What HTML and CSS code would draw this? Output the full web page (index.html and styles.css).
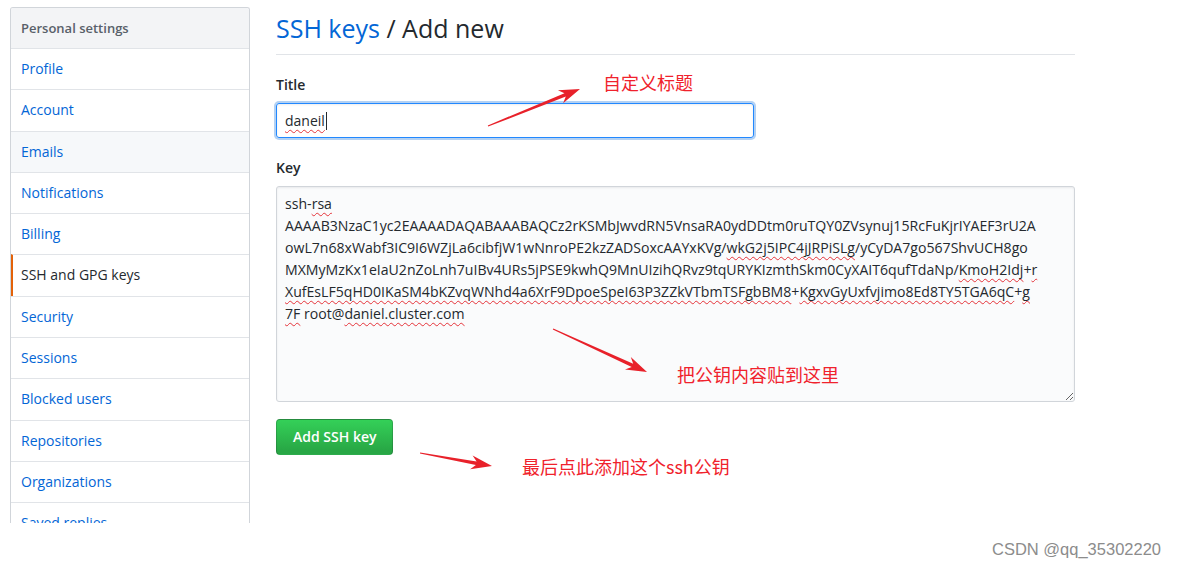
FILE: index.html
```html
<!DOCTYPE html>
<html lang="en">
<head>
<meta charset="utf-8">
<title>SSH keys / Add new</title>
<link rel="stylesheet" href="styles.css">
</head>
<body>
<div class="page">
  <nav class="menu">
    <div class="menu-heading">Personal settings</div>
    <a class="menu-item">Profile</a>
    <a class="menu-item">Account</a>
    <a class="menu-item hover">Emails</a>
    <a class="menu-item">Notifications</a>
    <a class="menu-item">Billing</a>
    <a class="menu-item selected">SSH and GPG keys</a>
    <a class="menu-item">Security</a>
    <a class="menu-item">Sessions</a>
    <a class="menu-item">Blocked users</a>
    <a class="menu-item">Repositories</a>
    <a class="menu-item">Organizations</a>
    <a class="menu-item">Saved replies</a>
  </nav>
  <main class="content">
    <h2 class="subhead"><a class="crumb">SSH keys</a> / Add new</h2>
    <div class="form-group">
      <label class="label">Title</label>
      <div class="input focused"><span class="sp">daneil</span><span class="caret"></span></div>
    </div>
    <div class="form-group">
      <label class="label">Key</label>
      <div class="textarea">
        <div class="line">ssh-<span class="sp">rsa</span></div>
        <div class="line">AAAAB3NzaC1yc2EAAAADAQABAAABAQCz2rKSMbJwvdRN5VnsaRA0ydDDtm0ruTQY0ZVsynuj15RcFuKjrIYAEF3rU2A</div>
        <div class="line">owL7n68xWabf3IC9I6WZjLa6cibfjW1wNnroPE2kzZADSoxcAAYxKVg/<span class="sp">wkG2j5IPC4jJRPiSLg</span>/yCyDA7go567ShvUCH8go</div>
        <div class="line">MXMyMzKx1eIaU2nZoLnh7uIBv4URs5jPSE9kwhQ9MnUIzihQRvz9tqURYKIzmthSkm0CyXAIT6qufTdaNp/<span class="sp">KmoH2Idj</span>+<span class="sp">r</span></div>
        <div class="line"><span class="sp">XufEsLF5qHD0IKaSM4bKZvqWNhd4a6XrF9DpoeSpeI63P3ZZkVTbmTSFgbBM8</span>+<span class="sp">KgxvGyUxfvjimo8Ed8TY5TGA6qC</span>+<span class="sp">g</span></div>
        <div class="line"><span class="sp">7F</span> root@<span class="sp">daniel.cluster.com</span></div>
      </div>
    </div>
    <div class="actions">
      <button class="btn-primary">Add SSH key</button>
    </div>
  </main>
</div>

<div class="annotations">
  <svg class="arrows" width="1177" height="567" viewBox="0 0 1177 567">
    <polygon points="488.2,126.6 565.8,96.6 563.1,103.3 580,89 557.9,90.3 564.5,93.3 487.8,125.4"/>
    <polygon points="552.8,329.6 631.7,367.0 625.0,369.6 647,372 630.8,356.9 633.2,363.7 553.3,328.5"/>
    <polygon points="419.9,453.6 475.9,464.9 470.1,469.2 492,466 472.6,455.4 476.6,461.4 420.1,452.4"/>
  </svg>
  <span class="note note-title">自定义标题</span>
  <span class="note note-key">把公钥内容贴到这里</span>
  <span class="note note-btn">最后点此添加这个ssh公钥</span>
  <span class="watermark">CSDN @qq_35302220</span>
</div>
</body>
</html>
```

FILE: styles.css
```css
html, body {
  margin: 0;
  padding: 0;
  background: #fff;
}

body {
  font-family: "Open Sans", "Noto Sans", sans-serif;
  font-size: 14px;
  color: #24292e;
  width: 1177px;
  height: 567px;
  overflow: hidden;
  position: relative;
}

.page {
  display: flex;
  align-items: flex-start;
  gap: 26px;
  padding: 7px 0 0 10px;
}

/* ---------- sidebar menu ---------- */
.menu {
  width: 238px;
  height: 515px;
  overflow: hidden;
  border: 1px solid #d1d5da;
  border-bottom: 0;
  border-radius: 3px 3px 0 0;
  display: flex;
  flex-direction: column;
  flex-shrink: 0;
}

.menu-heading {
  height: 40px;
  line-height: 40px;
  padding: 0 10px;
  background: #f3f4f6;
  color: #586069;
  font-size: 13px;
  font-weight: 600;
}

.menu-item {
  flex-shrink: 0;
  display: block;
  height: 40.3px;
  line-height: 40.3px;
  padding: 0 10px;
  border-top: 1px solid #e1e4e8;
  color: #0366d6;
  font-size: 14px;
  cursor: pointer;
}

.menu-item.hover {
  background: #f6f8fa;
}

.menu-item.selected {
  color: #24292e;
  padding-left: 8px;
  border-left: 2px solid #e36209;
}

/* ---------- main ---------- */
.content {
  width: 799px;
  padding-top: 5px;
}

.subhead {
  margin: 0;
  padding-bottom: 10px;
  border-bottom: 1px solid #e1e4e8;
  font-size: 25px;
  line-height: 32px;
  font-weight: 400;
  color: #24292e;
}

.crumb {
  color: #0366d6;
}

.form-group {
  margin-top: 20px;
  display: flex;
  flex-direction: column;
  gap: 8px;
}

.label {
  font-weight: 600;
  line-height: 20px;
}

.input {
  box-sizing: border-box;
  width: 478px;
  height: 35px;
  padding: 0 8px;
  border: 1px solid #d1d5da;
  border-radius: 3px;
  display: flex;
  align-items: center;
  line-height: 20px;
}

.input.focused {
  border-color: #2188ff;
  box-shadow: inset 0 1px 2px rgba(27, 31, 35, 0.075), 0 0 0 2px rgba(3, 102, 214, 0.3);
}

.caret {
  display: inline-block;
  width: 1px;
  height: 18px;
  background: #24292e;
  margin-left: 1px;
}

.sp {
  text-decoration: underline wavy #e5333a;
  text-decoration-thickness: 1px;
  text-underline-offset: 3px;
  text-decoration-skip-ink: none;
}

.textarea {
  box-sizing: border-box;
  width: 799px;
  height: 216px;
  padding: 6px 8px;
  background: #fafbfc;
  border: 1px solid #d1d5da;
  border-radius: 3px;
  box-shadow: inset 0 1px 2px rgba(27, 31, 35, 0.075);
  overflow: hidden;
  resize: both;
}

.line {
  white-space: nowrap;
  line-height: 22px;
  font-size: 14.1px;
}

.actions {
  margin-top: 17px;
}

.btn-primary {
  box-sizing: border-box;
  height: 36px;
  font-family: inherit;
  font-size: 14px;
  font-weight: 600;
  line-height: 20px;
  padding: 0 16px;
  color: #fff;
  background: linear-gradient(-180deg, #34d058 0%, #28a745 90%);
  border: 1px solid rgba(27, 31, 35, 0.2);
  border-radius: 4px;
  cursor: pointer;
}

/* ---------- annotations overlay ---------- */
.annotations {
  position: absolute;
  inset: 0;
  pointer-events: none;
}

.arrows {
  position: absolute;
  left: 0;
  top: 0;
}

.arrows polygon {
  fill: #e8212a;
}

.note {
  position: absolute;
  font-family: "Noto Sans CJK SC", "Noto Sans", sans-serif;
  font-size: 18px;
  line-height: 24px;
  color: #f0222c;
  white-space: nowrap;
}

.note-title { left: 603px; top: 70px; }
.note-key { left: 677px; top: 362px; }
.note-btn { left: 522px; top: 454px; }

.watermark {
  position: absolute;
  left: 992px;
  top: 538px;
  font-family: "Liberation Sans", Arial, sans-serif;
  font-size: 16.5px;
  line-height: 22px;
  color: #8c8c8c;
  white-space: nowrap;
}
```
